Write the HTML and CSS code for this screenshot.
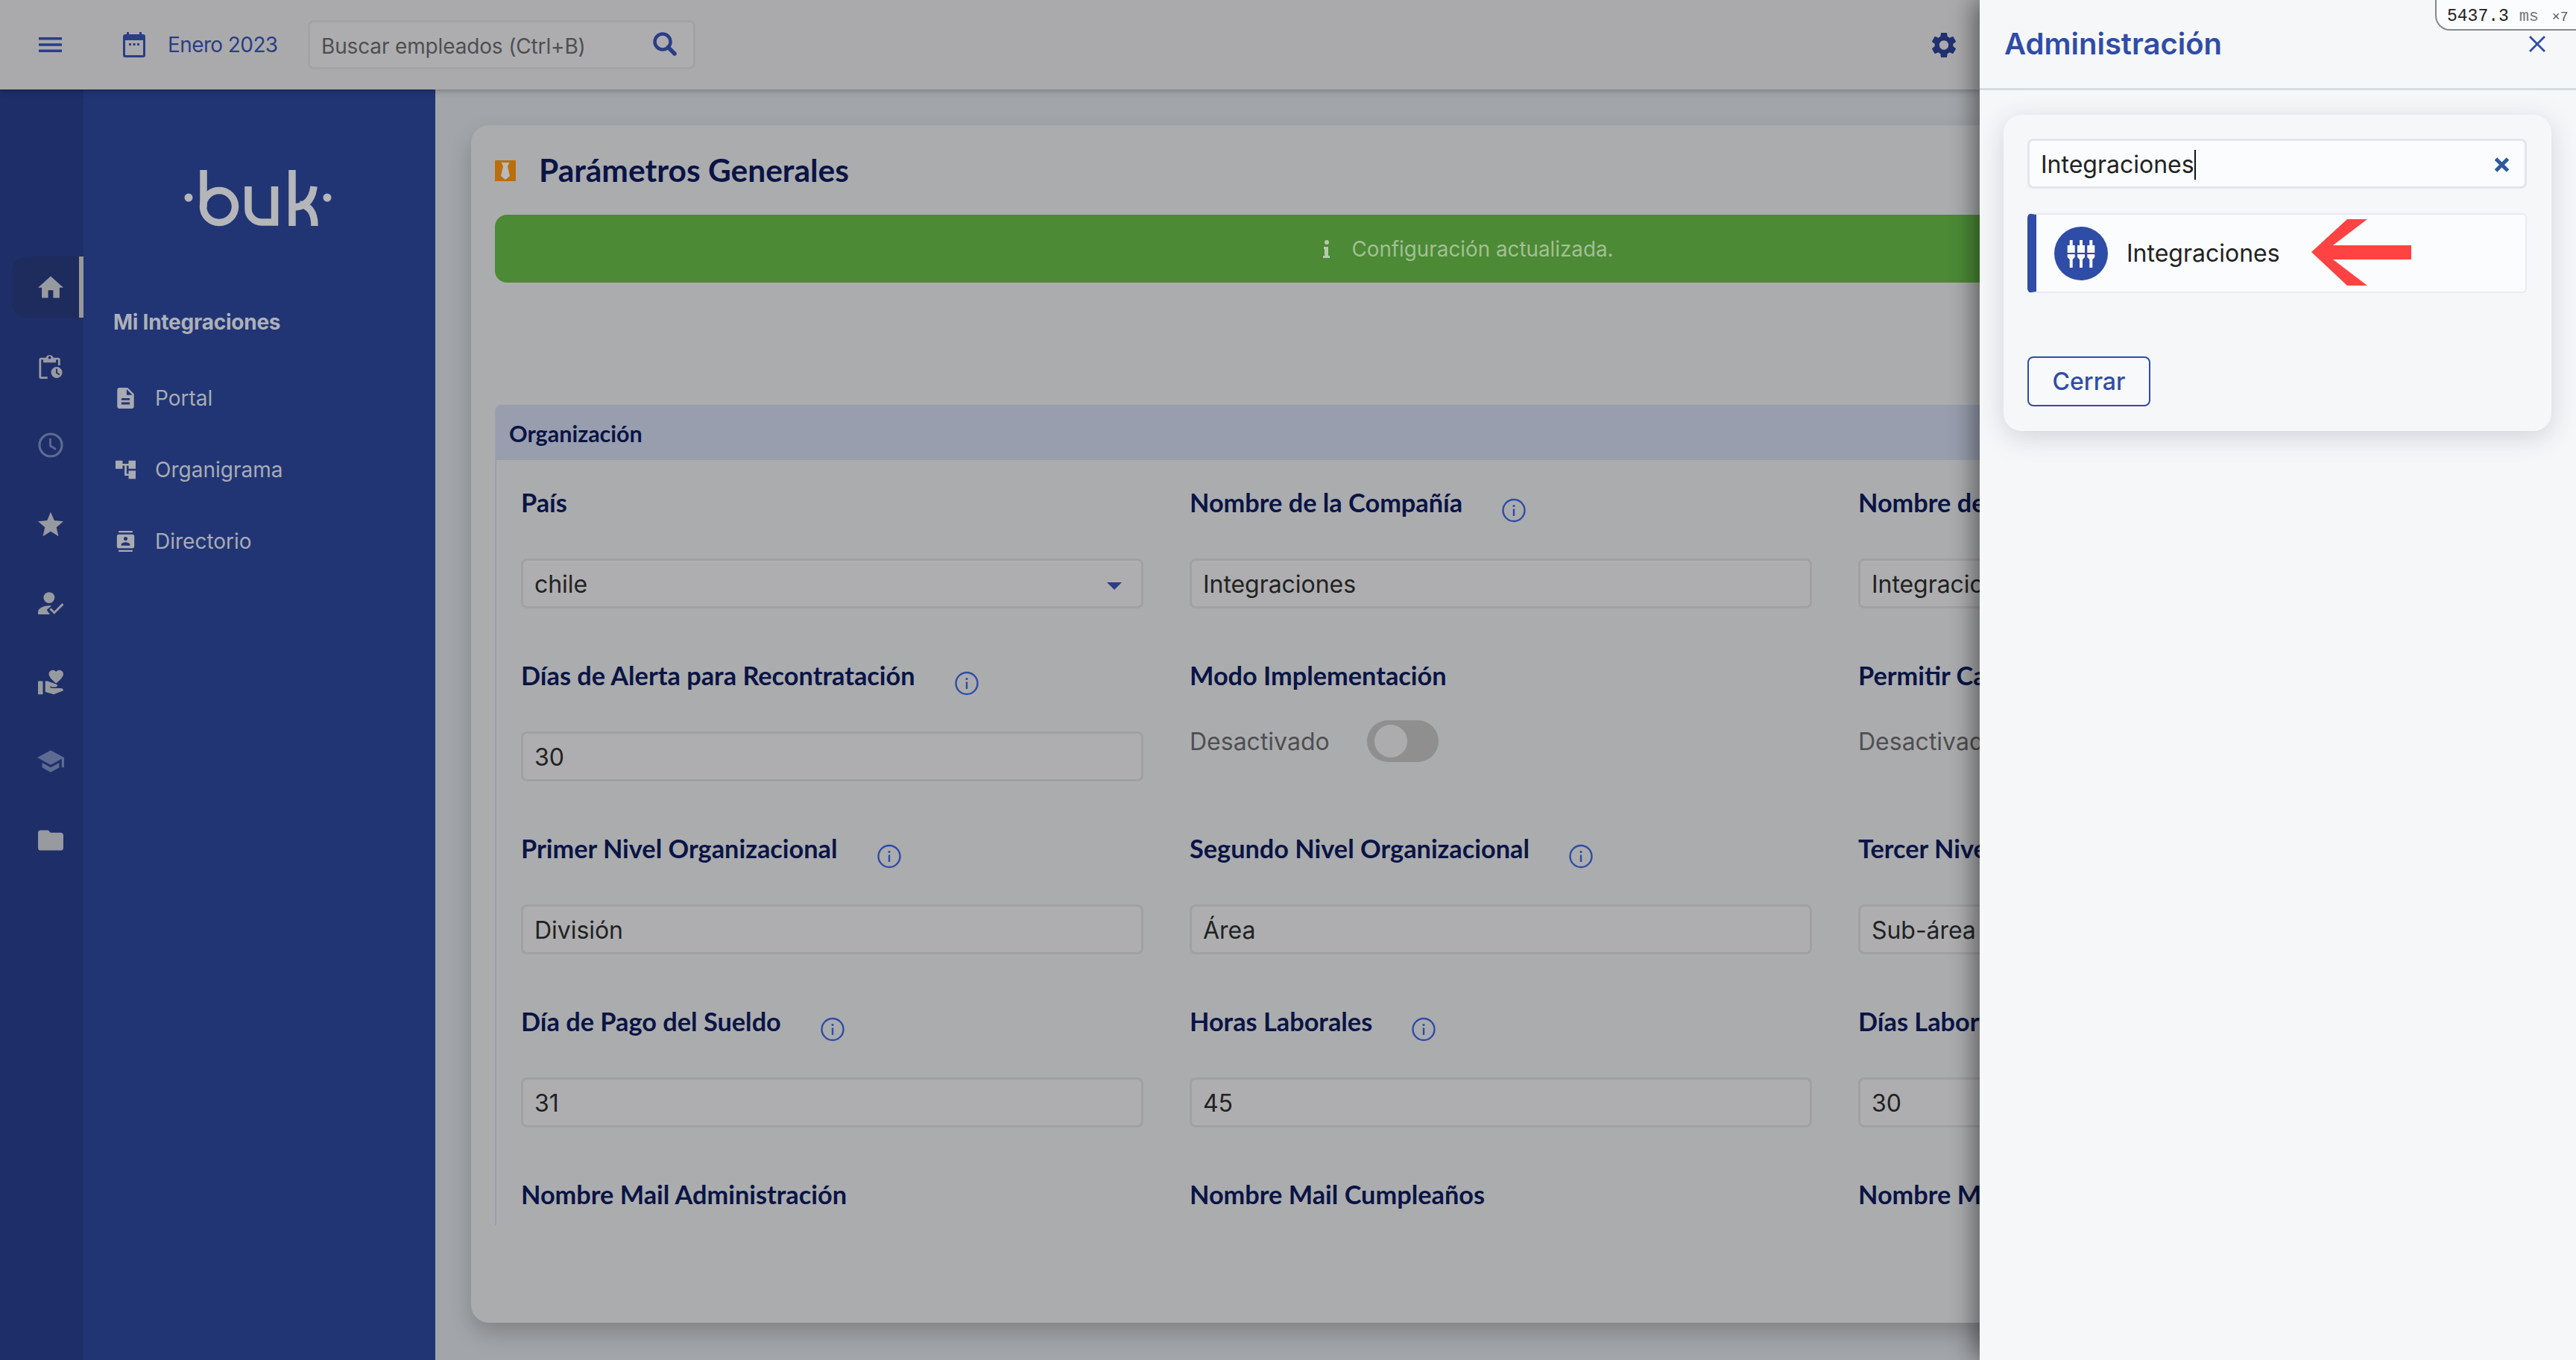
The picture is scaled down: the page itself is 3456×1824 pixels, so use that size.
FILE: index.html
```html
<!DOCTYPE html>
<html lang="es">
<head>
<meta charset="utf-8">
<title>Parámetros Generales</title>
<link rel="stylesheet" href="styles.css">
</head>
<body>
<svg class="sprite" aria-hidden="true">
  <symbol id="info" viewBox="0 0 32 32"><circle cx="16" cy="16" r="14.5" fill="none" stroke="currentColor" stroke-width="2.4"/><rect x="14.8" y="14" width="2.4" height="9.5" fill="currentColor"/><circle cx="16" cy="10" r="1.6" fill="currentColor"/></symbol>
</svg>
<div class="app">
  <div class="shell">
    <header class="topbar">
      <svg class="ico-menu" viewBox="0 0 31 20"><path d="M0 0h31v3.6H0zM0 8.2h31v3.6H0zM0 16.4h31V20H0z"/></svg>
      <svg class="ico-cal" viewBox="0 0 30 34"><path d="M5 0h3v3h14V0h3v3h2a3 3 0 0 1 3 3v25a3 3 0 0 1-3 3H3a3 3 0 0 1-3-3V6a3 3 0 0 1 3-3h2zM3 11v20h24V11z"/><path d="M8 15h3v3H8zM13.500 15h3v3h-3zM19 15h3v3h-3z"/></svg>
      <span class="period">Enero 2023</span>
      <div class="search">
        <span>Buscar empleados (Ctrl+B)</span>
        <svg class="ico-search" viewBox="0 0 32 32"><circle cx="13" cy="13" r="10.500" fill="none" stroke="currentColor" stroke-width="4.500"/><path d="M20.500 20.500L29 29" stroke="currentColor" stroke-width="5.500" stroke-linecap="round"/></svg>
      </div>
      <svg class="ico-gear" viewBox="2.500 1.800 19 20.400"><path d="M19.140 12.940c.04-.3.06-.61.06-.94 0-.32-.02-.64-.07-.94l2.030-1.580a.49.49 0 0 0 .12-.61l-1.920-3.320a.488.488 0 0 0-.59-.22l-2.390.96c-.5-.38-1.030-.7-1.620-.94l-.36-2.540a.484.484 0 0 0-.48-.41h-3.840c-.24 0-.43.17-.47.41l-.36 2.540c-.59.24-1.130.57-1.620.94l-2.390-.96c-.22-.08-.47 0-.59.22L2.740 8.870c-.12.21-.08.47.12.61l2.030 1.580c-.05.3-.09.63-.09.94s.02.64.07.94l-2.030 1.580a.49.49 0 0 0-.12.61l1.920 3.320c.12.22.37.29.59.22l2.390-.96c.5.38 1.030.7 1.620.94l.36 2.540c.05.24.24.41.48.41h3.840c.24 0 .44-.17.47-.41l.36-2.540c.59-.24 1.130-.56 1.620-.94l2.390.96c.22.08.47 0 .59-.22l1.920-3.320c.12-.22.07-.47-.12-.61l-2.010-1.580zM12 15.600c-1.980 0-3.600-1.620-3.600-3.600s1.620-3.600 3.600-3.600 3.600 1.620 3.600 3.600-1.620 3.600-3.600 3.600z"/></svg>
    </header>
    <div class="body">
      <nav class="rail">
        <a class="rail-item active"><svg viewBox="2 3 20 17"><path d="M10 20v-6h4v6h5v-8h3L12 3 2 12h3v8z"/></svg></a>
        <a class="rail-item"><svg viewBox="0 0 33 36"><path d="M3 6h6.500a6 6 0 0 1 11 0H27a3 3 0 0 1 3 3v8h-3V9h-3v4H6V9H3v24h9v3H3a3 3 0 0 1-3-3V9a3 3 0 0 1 3-3zm12-2a2 2 0 1 0 0 4 2 2 0 0 0 0-4z"/><path fill-rule="evenodd" d="M25 18a8 8 0 1 1 0 16 8 8 0 0 1 0-16zm-1 3v6l4.500 3 1-1.500-3.500-2.400V21z" transform="translate(0 1)"/></svg></a>
        <a class="rail-item dim"><svg viewBox="0 0 34 34"><circle cx="17" cy="17" r="15" fill="none" stroke="currentColor" stroke-width="3.200"/><path d="M16.500 8v10l7.500 4.500" fill="none" stroke="currentColor" stroke-width="2.800"/></svg></a>
        <a class="rail-item"><svg viewBox="2 2 20 19"><path d="M12 17.270L18.180 21l-1.640-7.030L22 9.240l-7.190-.61L12 2 9.190 8.630 2 9.240l5.460 4.730L5.820 21z"/></svg></a>
        <a class="rail-item"><svg viewBox="0 0 32 28"><circle cx="14" cy="7" r="7"/><path d="M0 28v-3c0-5 8-8 14-8 1 0 2 .1 3 .3l-6 5.200 4 5.500z"/><path d="M15.500 21l5 5L31.500 15" fill="none" stroke="currentColor" stroke-width="2.800"/></svg></a>
        <a class="rail-item"><svg viewBox="1 2 21 20"><path d="M1 11h4v11H1zm15-7.750C16.650 2.490 17.660 2 18.700 2 20.550 2 22 3.450 22 5.300c0 2.270-2.910 4.900-6 7.700-3.090-2.810-6-5.440-6-7.700C10 3.450 11.450 2 13.300 2c1.040 0 2.050.49 2.700 1.250zM20 17h-7l-2.090-.73.33-.94L13 16h2.820c.65 0 1.180-.53 1.180-1.180 0-.49-.31-.93-.77-1.110L8.970 11H7v9.020L14 22l8.010-3c-.01-1.100-.9-2-2.010-2z"/></svg></a>
        <a class="rail-item dim wide"><svg viewBox="1 3 22 18"><path d="M5 13.180v4L12 21l7-3.820v-4L12 17l-7-3.820zM12 3L1 9l11 6 9-4.910V17h2V9L12 3z"/></svg></a>
        <a class="rail-item"><svg viewBox="2 4 20 16"><path d="M10 4H4c-1.100 0-1.990.9-1.990 2L2 18c0 1.100.9 2 2 2h16c1.100 0 2-.9 2-2V8c0-1.100-.9-2-2-2h-8l-2-2z"/></svg></a>
      </nav>
      <aside class="side">
        <svg class="logo" viewBox="0 0 198 76"><g fill="none" stroke="currentColor" stroke-width="9.500"><path d="M26 0v50"/><circle cx="47" cy="49" r="21.500"/><path d="M86 22v30a18 18 0 0 0 18 18h17.500V22"/><path d="M145 0v75"/><path d="M145 50c18 0 27-10 29-28M155 46c14 2 20 12 20 29"/></g><circle cx="6" cy="37" r="5.500"/><circle cx="192" cy="37" r="5.500"/></svg>
        <div class="side-title">Mi Integraciones</div>
        <a class="side-item"><svg viewBox="4 2 16 20"><path d="M14 2H6c-1.100 0-1.990.9-1.990 2L4 20c0 1.100.89 2 1.990 2H18c1.100 0 2-.9 2-2V8l-6-6zm2 16H8v-2h8v2zm0-4H8v-2h8v2zm-3-5V3.500L18.500 9H13z"/></svg><span>Portal</span></a>
        <a class="side-item"><svg viewBox="2 3 20 18"><path d="M22 11V3h-7v3H9V3H2v8h7V8h2v10h4v3h7v-8h-7v3h-2V8h2v3z"/></svg><span>Organigrama</span></a>
        <a class="side-item"><svg viewBox="2 0 20 24"><path d="M20 0H4v2h16V0zM4 24h16v-2H4v2zM20 4H4c-1.100 0-2 .9-2 2v12c0 1.100.9 2 2 2h16c1.100 0 2-.9 2-2V6c0-1.100-.9-2-2-2zm-8 2.750c1.240 0 2.250 1.010 2.250 2.250s-1.010 2.250-2.250 2.250S9.750 10.240 9.750 9 10.760 6.750 12 6.750zM17 17H7v-1.500c0-1.670 3.330-2.500 5-2.500s5 .83 5 2.500V17z"/></svg><span>Directorio</span></a>
      </aside>
      <main class="content">
        <section class="card">
          <div class="card-head">
            <svg class="ico-tie" viewBox="0 0 28 28"><rect width="28" height="28" fill="#b96f0d"/><path d="M8.500 3h11l-2.500 5 3 13-6 5-6-5 3-13z" fill="#b9bab9"/></svg>
            <h1>Parámetros Generales</h1>
          </div>
          <div class="alert">
            <svg class="ico-i" viewBox="0 0 10 24"><circle cx="5" cy="3" r="3"/><path d="M1 9h6v12h2v3H0v-3h2v-9H1z"/></svg>
            <span>Configuración actualizada.</span>
          </div>
          <div class="section">
            <div class="section-head">Organización</div>
            <div class="grid">
              <div class="field"><div class="label">País</div><div class="input select"><span>chile</span><i class="caret"></i></div></div>
              <div class="field"><div class="label">Nombre de la Compañía<svg class="ico-info"><use href="#info"/></svg></div><div class="input">Integraciones</div></div>
              <div class="field"><div class="label">Nombre de Fantasía</div><div class="input">Integraciones</div></div>

              <div class="field"><div class="label">Días de Alerta para Recontratación<svg class="ico-info"><use href="#info"/></svg></div><div class="input">30</div></div>
              <div class="field"><div class="label">Modo Implementación</div><div class="switch-row"><span>Desactivado</span><i class="switch"><i class="knob"></i></i></div></div>
              <div class="field"><div class="label">Permitir Carga Masiva</div><div class="switch-row"><span>Desactivado</span><i class="switch"><i class="knob"></i></i></div></div>

              <div class="field"><div class="label">Primer Nivel Organizacional<svg class="ico-info"><use href="#info"/></svg></div><div class="input">División</div></div>
              <div class="field"><div class="label">Segundo Nivel Organizacional<svg class="ico-info"><use href="#info"/></svg></div><div class="input">Área</div></div>
              <div class="field"><div class="label">Tercer Nivel Organizacional</div><div class="input">Sub-área</div></div>

              <div class="field"><div class="label">Día de Pago del Sueldo<svg class="ico-info"><use href="#info"/></svg></div><div class="input">31</div></div>
              <div class="field"><div class="label">Horas Laborales<svg class="ico-info"><use href="#info"/></svg></div><div class="input">45</div></div>
              <div class="field"><div class="label">Días Laborales</div><div class="input">30</div></div>

              <div class="field"><div class="label">Nombre Mail Administración</div></div>
              <div class="field"><div class="label">Nombre Mail Cumpleaños</div></div>
              <div class="field"><div class="label">Nombre Mail Notificaciones</div></div>
            </div>
          </div>
        </section>
      </main>
    </div>
  </div>
  <aside class="panel">
    <div class="timer"><b>5437.3</b> <span class="ms">ms</span> <span class="times">×7</span></div>
    <header class="panel-head">
      <h2>Administración</h2>
      <svg class="ico-close" viewBox="0 0 22 22"><path d="M1 1l20 20M21 1L1 21" stroke="currentColor" stroke-width="2.800" fill="none"/></svg>
    </header>
    <div class="panel-card">
      <div class="panel-search"><span class="typed">Integraciones</span><svg class="ico-clear" viewBox="0 0 21 20"><path d="M2.500 2l16 16M18.500 2l-16 16" stroke="currentColor" stroke-width="5" fill="none"/></svg></div>
      <div class="result">
        <svg class="ico-plug" viewBox="0 0 72 72"><circle cx="36" cy="36" r="36" fill="#2f4ca7"/><g fill="#fbfcfe"><path d="M20.700 18h4v7h3v10h-10V25h3zM17.700 37h10v4l-3 3v11h-4V44l-3-3z"/><path d="M34 18h4v7h3v10H31V25h3zM31 37h10v4l-3 3v11h-4V44l-3-3z"/><path d="M47.300 18h4v7h3v10h-10V25h3zM44.300 37h10v4l-3 3v11h-4V44l-3-3z"/></g></svg>
        <span>Integraciones</span>
      </div>
      <a class="btn">Cerrar</a>
      <svg class="arrow" viewBox="0 0 134 89"><path d="M0 44L48 0h27L29 35h105v19H29l46 35H48z" fill="#ff4242"/></svg>
    </div>
  </aside>
</div>
</body>
</html>
```
FILE: styles.css
```css
* { box-sizing: border-box; }
html, body { margin: 0; padding: 0; }
body { width: 3456px; height: 1824px; overflow: hidden; font-family: Inter, "Liberation Sans", sans-serif; background: #a2a5a9; }
.sprite { display: none; }
.app { display: flex; width: 3456px; height: 1824px; position: relative; overflow: hidden; }
.shell { width: 2656px; flex: none; display: flex; flex-direction: column; height: 100%; overflow: hidden; }

.topbar { height: 120px; flex: none; background: #aaaaac; display: flex; align-items: center; padding-left: 52px; position: relative; z-index: 2; box-shadow: 0 2px 8px rgba(0,0,0,.25); }
.ico-menu { width: 31px; height: 20px; fill: #2a3e86; flex: none; margin-right: 82px; }
.ico-cal { width: 30px; height: 34px; fill: #2a3e86; flex: none; margin-right: 30px; }
.period { font-size: 28px; color: #2a3e86; width: 188px; flex: none; letter-spacing: -.6px; }
.search { width: 520px; height: 66px; flex: none; border: 3px solid #a3a3a6; border-radius: 8px; background: #adadaf; display: flex; align-items: center; justify-content: space-between; padding: 3px 22px 0 15px; font-size: 28px; letter-spacing: -.15px; color: #4f4f50; }
.ico-search { width: 32px; height: 32px; color: #2a3e86; margin-top: -6px; }
.ico-gear { width: 34px; height: 35px; fill: #21306f; margin-left: auto; margin-right: 31px; flex: none; }

.body { flex: 1; display: flex; min-height: 0; }
.rail { width: 112px; flex: none; background: #1e2e69; padding: 224px 0 0 16px; display: flex; flex-direction: column; gap: 24px; }
.rail-item { width: 96px; height: 82px; flex: none; display: flex; align-items: center; justify-content: center; padding-left: 8px; color: #979a9f; fill: #979a9f; }
.rail-item svg { width: 34px; height: 34px; }
.rail-item.wide svg { width: 36px; height: 30px; }
.rail-item.dim { color: #5d6a92; fill: #5d6a92; }
.rail-item.active { background: #1d2c5d; border-right: 6px solid #989898; border-radius: 20px 0 0 20px; padding-left: 14px; }

.side { width: 472px; flex: none; background: #213575; padding: 108px 0 0 40px; display: flex; flex-direction: column; color: #a9abb3; }
.logo { width: 198px; height: 76px; margin-left: 95px; flex: none; color: #b5b6b9; fill: #b5b6b9; }
.side-title { margin-top: 111px; font-size: 28px; font-weight: 700; line-height: 34px; letter-spacing: -.25px; color: #aeb0b7; margin-bottom: 37px; }
.side-item { display: flex; align-items: center; height: 96px; font-size: 28px; color: #a9abb3; }
.side-item svg { width: 27px; height: 28px; fill: #a9abb3; flex: none; margin-left: 3px; margin-right: 26px; }

.content { flex: 1; min-width: 0; padding: 48px 0 50px 48px; overflow: hidden; }
.card { width: 2900px; height: 1606px; background: #abacae; border-radius: 24px; box-shadow: 0 14px 30px rgba(0,0,0,.2); padding: 46px 0 0 32px; }
.card-head { display: flex; align-items: center; height: 30px; margin-bottom: 44px; }
.ico-tie { width: 28px; height: 28px; flex: none; margin-right: 31px; }
h1 { margin: -2px 0 0; font: 700 42.5px/1 Lato, "Noto Sans", sans-serif; color: #0a1445; white-space: nowrap; }
.alert { width: 2612px; height: 91px; background: #4c8a35; border-radius: 16px; display: flex; align-items: center; justify-content: center; gap: 28px; color: #a3bf94; font-size: 27.8px; }
.ico-i { width: 10px; height: 24px; fill: #b9c9ae; }

.section { margin-top: 164px; width: 2868px; height: 1100px; border-left: 2px solid #9ba0b0; border-radius: 8px 0 0 0; overflow: hidden; }
.section-head { height: 74px; margin-left: -2px; padding-left: 19px; padding-top: 2px; background: #989eae; display: flex; align-items: center; font: 700 30.5px/1 Lato, "Noto Sans", sans-serif; color: #0a1445; }
.grid { display: grid; grid-template-columns: repeat(3, 835px); column-gap: 62px; row-gap: 57px; padding: 24px 0 0 33px; }
.label { height: 66px; display: flex; align-items: center; margin-bottom: 42px; font: 700 34.3px/1 Lato, "Noto Sans", sans-serif; color: #0a1445; white-space: nowrap; }
.ico-info { width: 32px; height: 33px; color: #2f4ca7; margin-left: 53px; margin-top: 20px; flex: none; }
.input { height: 67px; border: 3px solid #a1a1a4; border-radius: 8px; background: #aeaeb0; display: flex; align-items: center; padding: 2px 15px 0; font-size: 32px; letter-spacing: -.05px; color: #222; }
.select { justify-content: space-between; }
.caret { width: 0; height: 0; border-left: 10px solid transparent; border-right: 10px solid transparent; border-top: 10px solid #2a3e86; margin: 4px 11px 0 0; }
.switch-row { display: flex; align-items: center; gap: 50px; margin-top: -15px; height: 56px; font-size: 32px; color: #4f4f50; }
.switch { display: block; width: 96px; height: 56px; border-radius: 28px; background: #8f8f8f; padding: 6px 0 0 10px; }
.knob { display: block; width: 44px; height: 44px; border-radius: 50%; background: #acacae; }

.panel { width: 800px; flex: none; height: 100%; background: #f6f7f9; position: relative; box-shadow: -8px 0 30px rgba(0,0,0,.45); z-index: 3; padding: 0 33px 0 32px; }
.timer { position: absolute; top: -4px; right: -6px; width: 195px; height: 45px; background: #fbfcfe; border: 2px solid #888; border-radius: 0 0 0 20px; padding: 10px 0 0 14px; font: 400 23px/28px "Liberation Mono", monospace; color: #222; white-space: nowrap; }
.timer b { font-weight: 400; }
.timer .ms { color: #777; font-size: 22px; }
.timer .times { color: #555; font-size: 18px; margin-left: 4px; }
.panel-head { height: 121px; margin: 0 -33px 0 -32px; padding: 0 41px 0 33px; border-bottom: 3px solid #d6dbe2; display: flex; align-items: center; justify-content: space-between; }
h2 { margin: 0; font: 600 40px/1 Inter, sans-serif; color: #2f4ca7; }
.ico-close { width: 22px; height: 22px; color: #2f4ca7; margin-top: -1px; }
.panel-card { position: relative; height: 424px; width: 735px; margin-top: 33px; background: #f6f7f9; border-radius: 24px; box-shadow: 0 8px 36px rgba(40,50,70,.18); padding: 32px 33px 0 32px; }
.panel-search { height: 67px; border: 3px solid #e3e5e9; border-radius: 8px; background: #fbfcfe; display: flex; align-items: center; justify-content: space-between; padding: 2px 20px 0 15px; font-size: 32px; color: #222; }
.typed { border-right: 2px solid #111; line-height: 40px; }
.ico-clear { width: 21px; height: 20px; color: #2f5a9c; }
.result { margin-top: 33px; height: 107px; border: 2px solid #e9ebf6; border-left: 12px solid #2f4ca7; border-radius: 6px; background: #fbfcfe; display: flex; align-items: center; padding-left: 24px; font-size: 32px; color: #222; }
.ico-plug { width: 72px; height: 72px; flex: none; margin-right: 25px; }
.btn { margin-top: 85px; width: 165px; height: 67px; display: flex; align-items: center; justify-content: center; border: 2px solid #2f4ca7; border-radius: 8px; background: #f8f9fb; font-size: 32px; font-weight: 500; color: #2f4ca7; }
.arrow { position: absolute; left: 413px; top: 140px; width: 134px; height: 89px; }
```
